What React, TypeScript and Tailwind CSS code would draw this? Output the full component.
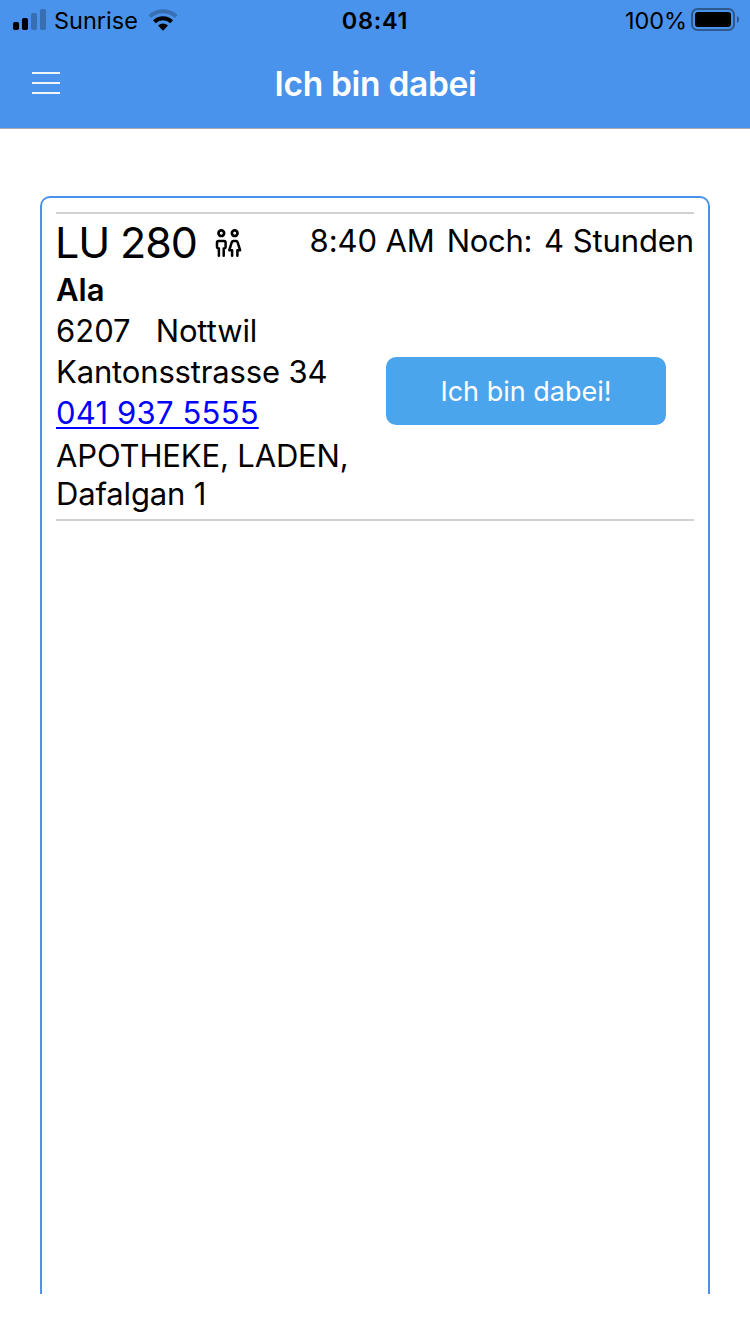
function SignalIcon() {
  return (
    <svg width="34" height="22" viewBox="0 0 34 22" className="shrink-0">
      <rect x="0" y="13" width="6" height="8" rx="1.7" />
      <rect x="9" y="9" width="6" height="12" rx="1.7" />
      <rect x="18" y="4" width="6" height="17" rx="1.7" fillOpacity="0.24" />
      <rect x="27" y="0" width="6" height="21" rx="1.7" fillOpacity="0.24" />
    </svg>
  );
}

function WifiIcon() {
  return (
    <svg width="30" height="22" viewBox="0 0 30 22" className="shrink-0">
      <path d="M0.4 6.1 A21.4 21.4 0 0 1 29.6 6.1 L26.9 9 A17.2 17.2 0 0 0 3.1 9 Z" fillOpacity="0.24" />
      <path d="M5 11.2 A14.4 14.4 0 0 1 25 11.2 L22.2 14.3 A10.3 10.3 0 0 0 7.8 14.3 Z" />
      <path d="M10 16.6 A7.2 7.2 0 0 1 20 16.6 L15 21.7 Z" />
    </svg>
  );
}

function BatteryIcon() {
  return (
    <svg width="50" height="24" viewBox="0 0 50 24" className="shrink-0">
      <rect x="1" y="1" width="42" height="21" rx="5.5" fill="none" stroke="#000" strokeOpacity="0.4" strokeWidth="2" />
      <rect x="4" y="4" width="36" height="15" rx="3" />
      <path d="M46 8 C47.4 8.6 48 10 48 11.5 C48 13 47.4 14.4 46 15 Z" fillOpacity="0.42" />
    </svg>
  );
}

function PeopleIcon() {
  return (
    <svg
      width="28"
      height="30"
      viewBox="0 0 28 30"
      fill="none"
      stroke="#000"
      strokeWidth="2.5"
      strokeLinecap="round"
      strokeLinejoin="round"
      className="shrink-0"
    >
      <circle cx="6.3" cy="5.2" r="2.8" strokeWidth="2.7" />
      <circle cx="19.7" cy="5.2" r="2.8" strokeWidth="2.7" />
      <path d="M3.9 27.8 V20.6 Q2 20.4 2 18.8 V14.7 Q2 13.1 3.6 13.1 H9 Q10.6 13.1 10.6 14.7 V18.8 Q10.6 20.4 8.7 20.6 V27.8" />
      <path d="M17.1 27.8 V22.2 H14.3 L16.7 14.5 Q17.2 13.1 18.5 13.1 H20.9 Q22.2 13.1 22.7 14.5 L25.1 22.2 H22.4 V27.8" />
    </svg>
  );
}

function StatusBar() {
  return (
    <div className="grid h-10 grid-cols-[1fr_auto_1fr] text-[23.5px] leading-[41px]">
      <div className="flex pl-[13px]">
        <div className="pt-[9px]"><SignalIcon /></div>
        <span className="ml-[7px] w-[85px]">Sunrise</span>
        <div className="ml-[8.5px] pt-[9px]"><WifiIcon /></div>
      </div>
      <span className="font-semibold tracking-[0.7px]">08:41</span>
      <div className="flex justify-end">
        <span className="tracking-[-0.1px]">100%</span>
        <div className="ml-1 pr-[9px] pt-2"><BatteryIcon /></div>
      </div>
    </div>
  );
}

export default function App() {
  return (
    <div className="flex h-[1334px] w-[750px] flex-col overflow-hidden bg-white font-['Inter',sans-serif] text-black">
      <header className="h-[129px] shrink-0 border-b border-[#a9adb3] bg-[#4a93ec]">
        <StatusBar />
        <div className="grid h-[88px] grid-cols-[1fr_auto_1fr]">
          <button aria-label="Menu" className="ml-8 mt-8 flex h-6 w-7 flex-col gap-2">
            <span className="h-0.5 w-full bg-[#edf4fd]" />
            <span className="h-0.5 w-full bg-[#edf4fd]" />
            <span className="h-0.5 w-full bg-[#edf4fd]" />
          </button>
          <h1 className="pl-px text-[33.5px] font-semibold leading-[89px] tracking-[-0.3px] text-white">Ich bin dabei</h1>
        </div>
      </header>

      <main className="mx-10 mb-10 mt-[67px] flex-1 rounded-t-[10px] border-2 border-b-0 border-[#4a93ec] px-[14px] pt-[14px]">
        <article className="h-[309px] border-y-2 border-[#d1d1d1] text-[31px]">
          <div className="flex h-[55px] justify-between">
            <div className="flex">
              <span className="-ml-px w-[143px] whitespace-nowrap text-[43px] leading-[57px] tracking-[-1.1px]">LU 280</span>
              <div className="ml-[17px] pt-[14px]"><PeopleIcon /></div>
            </div>
            <div className="flex gap-3 leading-[54px] tracking-[-0.1px]">
              <span>8:40 AM</span>
              <span className="tracking-[-0.3px]">Noch:</span>
              <span>4 Stunden</span>
            </div>
          </div>
          <div className="flex">
            <div className="w-[330px] whitespace-nowrap leading-[41px]">
              <p className="font-semibold">Ala</p>
              <p className="flex gap-[25px]"><span>6207</span><span className="tracking-[-0.1px]">Nottwil</span></p>
              <p className="tracking-[-0.15px]">Kantonsstrasse 34</p>
              <p>
                <a href="tel:0419375555" className="tracking-[0.2px] text-[#0000ff] underline decoration-2 underline-offset-[3px]">041 937 5555</a>
              </p>
              <p className="pt-1 leading-[38px] tracking-[-0.15px]">APOTHEKE, LADEN,<br />Dafalgan 1</p>
            </div>
            <button className="mt-[88px] h-[68px] w-[280px] rounded-[10px] bg-[#4ba5ed] text-[27px] leading-[70px] text-white">
              Ich bin dabei!
            </button>
          </div>
        </article>
      </main>
    </div>
  );
}
